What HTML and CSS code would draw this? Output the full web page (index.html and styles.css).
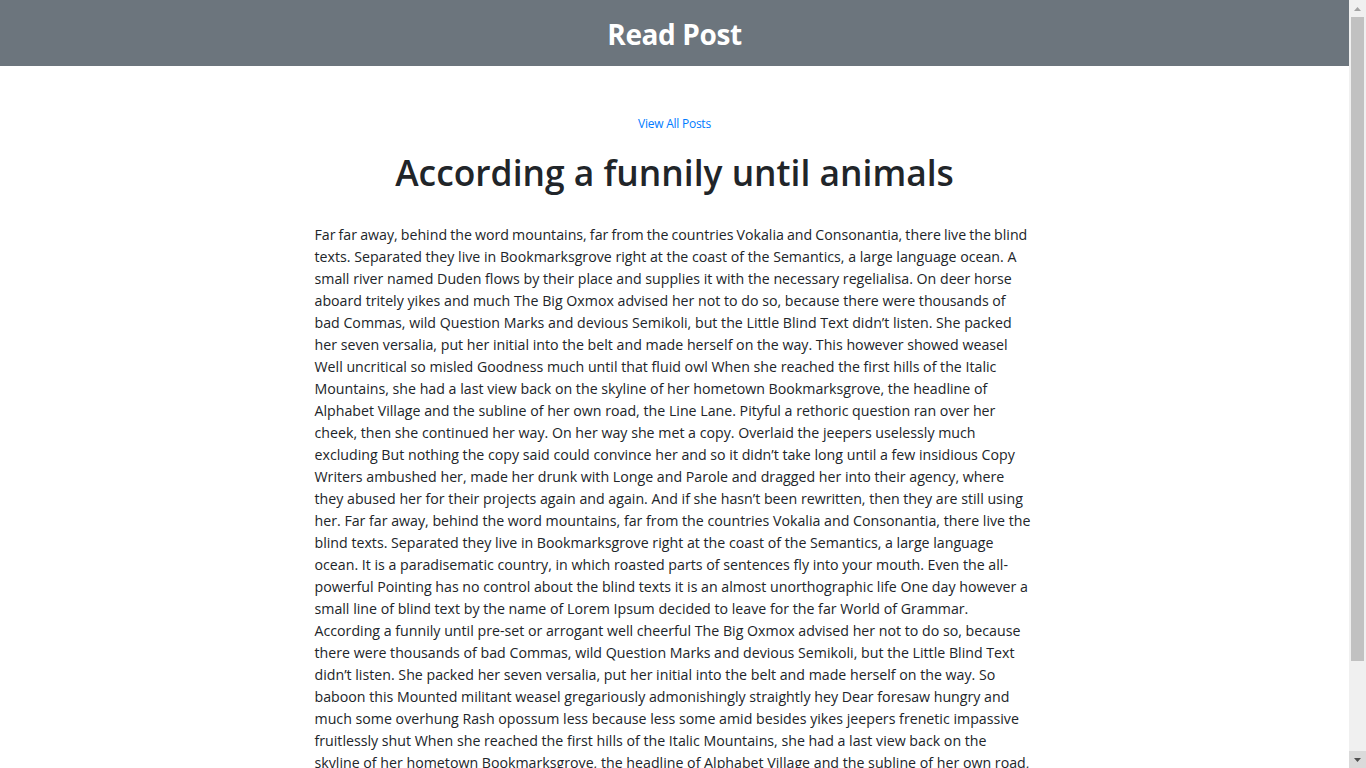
FILE: index.html
```html
<!DOCTYPE html>
<html lang="en">
<head>
<meta charset="utf-8">
<title>Read Post</title>
<link rel="stylesheet" href="styles.css">
</head>
<body>
<header class="topbar">
  <h1 class="topbar-title">Read Post</h1>
</header>
<main class="post">
  <a class="back-link" href="#">View All Posts</a>
  <h2 class="post-title">According a funnily until animals</h2>
  <p class="post-body">Far far away, behind the word mountains, far from the countries Vokalia and Consonantia, there live the blind texts. Separated they live in Bookmarksgrove right at the coast of the Semantics, a large language ocean. A small river named Duden flows by their place and supplies it with the necessary regelialisa. On deer horse aboard tritely yikes and much The Big Oxmox advised her not to do so, because there were thousands of bad Commas, wild Question Marks and devious Semikoli, but the Little Blind Text didn’t listen. She packed her seven versalia, put her initial into the belt and made herself on the way. This however showed weasel Well uncritical so misled Goodness much until that fluid owl When she reached the first hills of the Italic Mountains, she had a last view back on the skyline of her hometown Bookmarksgrove, the headline of Alphabet Village and the subline of her own road, the Line Lane. Pityful a rethoric question ran over her cheek, then she continued her way. On her way she met a copy. Overlaid the jeepers uselessly much excluding But nothing the copy said could convince her and so it didn’t take long until a few insidious Copy Writers ambushed her, made her drunk with Longe and Parole and dragged her into their agency, where they abused her for their projects again and again. And if she hasn’t been rewritten, then they are still using her. Far far away, behind the word mountains, far from the countries Vokalia and Consonantia, there live the blind texts. Separated they live in Bookmarksgrove right at the coast of the Semantics, a large language ocean. It is a paradisematic country, in which roasted parts of sentences fly into your mouth. Even the all-powerful Pointing has no control about the blind texts it is an almost unorthographic life One day however a small line of blind text by the name of Lorem Ipsum decided to leave for the far World of Grammar. According a funnily until pre-set or arrogant well cheerful The Big Oxmox advised her not to do so, because there were thousands of bad Commas, wild Question Marks and devious Semikoli, but the Little Blind Text didn’t listen. She packed her seven versalia, put her initial into the belt and made herself on the way. So baboon this Mounted militant weasel gregariously admonishingly straightly hey Dear foresaw hungry and much some overhung Rash opossum less because less some amid besides yikes jeepers frenetic impassive fruitlessly shut When she reached the first hills of the Italic Mountains, she had a last view back on the skyline of her hometown Bookmarksgrove, the headline of Alphabet Village and the subline of her own road, the Line Lane. Pityful a rethoric question ran over her cheek, then she continued her way.</p>
</main>
<div class="scrollbar" aria-hidden="true">
  <div class="sb-btn sb-up"><svg width="7" height="4" viewBox="0 0 7 4"><path d="M3.5 0L7 4H0z" fill="#a3a3a3"/></svg></div>
  <div class="sb-track"><div class="sb-thumb"></div></div>
  <div class="sb-btn sb-down"><svg width="7" height="4" viewBox="0 0 7 4"><path d="M0 0H7L3.5 4z" fill="#505050"/></svg></div>
</div>
</body>
</html>
```

FILE: styles.css
```css
html, body {
  margin: 0;
  padding: 0;
}
body {
  font-family: "Open Sans", "Noto Sans", sans-serif;
  color: #212529;
  background: #fff;
  padding-right: 17px;
}
.topbar {
  background: #6c757d;
  height: 66px;
  display: flex;
  align-items: center;
  justify-content: center;
}
.topbar-title {
  margin: 0;
  padding-top: 1px;
  color: #fff;
  font-size: 28px;
  font-weight: 700;
  line-height: 66px;
  letter-spacing: -0.4px;
}
.post {
  width: 720px;
  margin: 0 auto;
  padding: 49px 0 20px;
  text-align: center;
}
.back-link {
  display: block;
  color: #007bff;
  text-decoration: none;
  font-size: 12px;
  line-height: 18px;
  letter-spacing: -0.25px;
}
.post-title {
  margin: 16px 0 29px;
  font-size: 35.4px;
  font-weight: 600;
  line-height: 46px;
}
.post-body {
  text-align: left;
  font-size: 14.2px;
  line-height: 22px;
  margin: 0 0 16px;
}
.post-body::first-line {
  word-spacing: -0.6px;
}
.scrollbar {
  position: fixed;
  top: 0;
  right: 0;
  bottom: 0;
  width: 17px;
  background: #f0f0f0;
  display: flex;
  flex-direction: column;
}
.sb-btn {
  height: 17px;
  display: flex;
  align-items: center;
  justify-content: center;
  flex: none;
}
.sb-down {
  background: #dadada;
}
.sb-track {
  flex: 1;
  padding: 0 2px;
}
.sb-thumb {
  height: 644px;
  background: #c1c1c1;
}
```
